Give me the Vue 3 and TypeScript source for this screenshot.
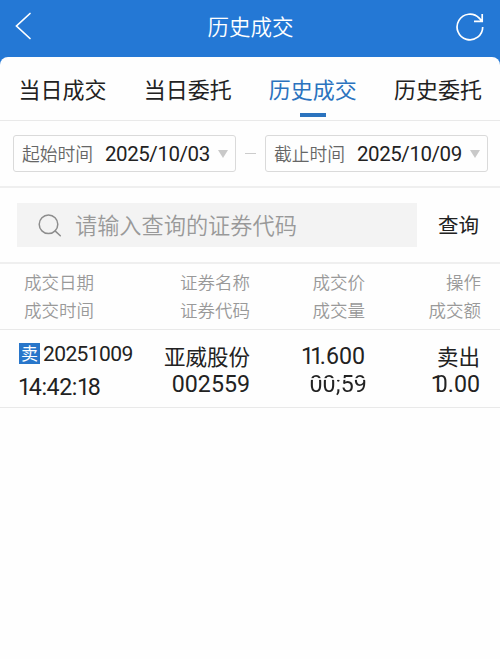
<script setup lang="ts">
import { ref } from 'vue'

const tabs: string[] = ['当日成交', '当日委托', '历史成交', '历史委托']
const active = ref(2)
const dates = [
  { label: '起始时间', value: '2025/10/03' },
  { label: '截止时间', value: '2025/10/09' },
]
const columns: [string, string][] = [
  ['成交日期', '成交时间'],
  ['证券名称', '证券代码'],
  ['成交价', '成交量'],
  ['操作', '成交额'],
]
</script>

<template>
  <div class="page">
    <header class="bar">
      <svg class="back" viewBox="0 0 18 28"><path d="M15 1.5 1.5 14 15 26.5" /></svg>
      <h1>历史成交</h1>
      <svg class="refresh" viewBox="0 0 30 30"><path d="M27.7 15A12.8 12.8 0 1 1 24.2 6.2L27 9.2M27.2 2V9.3H19" /></svg>
    </header>

    <main class="sheet">
      <nav class="tabs">
        <button v-for="(tab, i) in tabs" :key="tab" class="tab" :class="{ active: i === active }" @click="active = i">
          {{ tab }}
        </button>
      </nav>

      <section class="dates">
        <template v-for="(d, i) in dates" :key="d.label">
          <span v-if="i" class="dash"></span>
          <div class="date">
            <span class="date-label">{{ d.label }}</span>
            <span class="date-value">{{ d.value }}</span>
            <span class="caret"></span>
          </div>
        </template>
      </section>

      <section class="search">
        <div class="field">
          <svg class="lens" viewBox="0 0 24 24"><circle cx="10.5" cy="11.3" r="9.3" /><path d="m17.3 18.1 5 4.7" /></svg>
          <span>请输入查询的证券代码</span>
        </div>
        <button class="query">查询</button>
      </section>

      <section class="grid heads">
        <div v-for="c in columns" :key="c[0]" class="cell">
          <span>{{ c[0] }}</span>
          <span>{{ c[1] }}</span>
        </div>
      </section>

      <section class="grid record">
        <div class="cell when">
          <div class="day"><span class="badge">卖</span><span class="num day-num">20251009</span></div>
          <span class="num time"><span class="one">1</span>4:42:<span class="one">1</span>8</span>
        </div>
        <div class="cell">
          <span class="name">亚威股份</span>
          <span class="num">002559</span>
        </div>
        <div class="cell">
          <span class="name num price"><span class="one">11</span>.600</span>
          <span class="num volume worn">00;59</span>
        </div>
        <div class="cell">
          <span class="name">卖出</span>
          <span class="num amount"><span class="lead">1</span><span class="worn-side">0</span>.00</span>
        </div>
      </section>
    </main>
  </div>
</template>

<style>
body { background: #fefefe; }
</style>

<style scoped>
.page {
  width: 500px;
  height: 659px;
  overflow: hidden;
  background: #2478d5;
  color: #222;
  font-family: 'Noto Sans CJK SC', sans-serif;
}
.page * { box-sizing: border-box; }
button { border: 0; padding: 0; background: none; font: inherit; color: inherit; }
.bar {
  height: 57px;
  padding: 0 15px;
  display: flex;
  justify-content: space-between;
  align-items: flex-start;
}
svg { fill: none; stroke-linecap: round; }
.back { width: 18px; height: 28px; margin-top: 12px; stroke: #fff; stroke-width: 1.7; }
h1 { margin: 10px 0 0 13px; font-size: 21.5px; line-height: 32px; font-weight: 350; color: #fff; }
.refresh { width: 30px; height: 30px; margin-top: 12px; stroke: #fff; stroke-width: 1.7; stroke-linecap: butt; }
.sheet { height: 602px; background: #fefefe; border-radius: 8px 8px 0 0; }
.tabs {
  height: 64px;
  padding: 0 18px 0 18.5px;
  display: flex;
  justify-content: space-between;
  border-bottom: 1px solid #e9e9e9;
}
.tab {
  height: 60px;
  display: flex;
  flex-direction: column;
  align-items: center;
  padding-top: 15px;
  font-size: 22px;
  line-height: 32px;
}
.tab.active { color: #2b73be; }
.tab.active::after { content: ''; width: 26px; height: 4px; margin-top: 9px; background: #2b73be; }
.dates {
  height: 67px;
  padding: 0 12px 0 13px;
  display: flex;
  align-items: center;
  justify-content: space-between;
  border-bottom: 2px solid #efefef;
}
.date {
  width: 223px;
  height: 37px;
  padding: 0 7px 0 8px;
  display: flex;
  align-items: center;
  border: 1px solid #dadada;
  border-radius: 3px;
}
.date-label { width: 83px; margin-top: -1px; font-size: 17.8px; line-height: 28px; color: #666; font-weight: 350; }
.date-value { flex: 1; font: 20.5px/28px Roboto, sans-serif; letter-spacing: -0.43px; white-space: nowrap; }
.caret { border: 5.5px solid transparent; border-top: 8px solid #c9c9c9; border-bottom: 0; }
.dash { width: 11px; height: 1px; background: #ccc; }
.search {
  height: 76px;
  padding: 0 21px 0 17px;
  display: flex;
  align-items: center;
  justify-content: space-between;
  border-bottom: 2px solid #efefef;
}
.field {
  width: 400px;
  height: 44px;
  padding-left: 21px;
  display: flex;
  align-items: center;
  gap: 13px;
  background: #f3f3f3;
  color: #999;
  font-size: 22.2px;
  line-height: 32px;
  font-weight: 350;
}
.field span { margin-top: -2px; }
.lens { width: 24px; height: 24px; stroke: #8d8d8d; stroke-width: 1.5; }
.query { margin-top: -2px; font-size: 20.5px; line-height: 30px; }
.grid {
  display: grid;
  grid-template-columns: 118px 113px 115px 1fr;
  padding: 0 19px;
}
.cell { display: flex; flex-direction: column; align-items: flex-end; }
.cell:first-child { align-items: flex-start; }
.heads { height: 66px; padding-top: 4px; font-size: 17.5px; line-height: 27.5px; color: #999; font-weight: 350; border-bottom: 1px solid #e9e9e9; }
.heads .cell:first-child { padding-left: 5px; }
.record { height: 78px; padding: 12px 20px 0 19px; border-bottom: 1px solid #e9e9e9; font-size: 21.5px; line-height: 27px; }
.num { font-family: Roboto, sans-serif; font-size: 23.2px; line-height: 28px; white-space: nowrap; }
.cell:not(.when) .name { height: 28px; }
.day { height: 31px; padding-top: 1px; display: flex; align-items: flex-start; gap: 3px; }
.badge { width: 21px; height: 21px; background: #2876ca; color: #fff; font-size: 17px; line-height: 20px; text-align: center; }
.day-num { font-size: 21px; line-height: 22px; letter-spacing: -0.6px; }
.time { letter-spacing: -0.45px; }
.time .one { letter-spacing: -2.2px; }
.time .one:first-child { margin-left: -1px; }
.price .one { letter-spacing: -3.6px; }
.volume { margin-right: -2px; letter-spacing: 0.1px; }
.worn {
  background: linear-gradient(#222 30%, #2222 30% 34%, #222 34%);
  background-clip: text;
  -webkit-background-clip: text;
  color: transparent;
}
.worn-side {
  background: linear-gradient(90deg, transparent 22%, #222 22%);
  background-clip: text;
  -webkit-background-clip: text;
  color: transparent;
}
.lead { letter-spacing: -9px; }
</style>
